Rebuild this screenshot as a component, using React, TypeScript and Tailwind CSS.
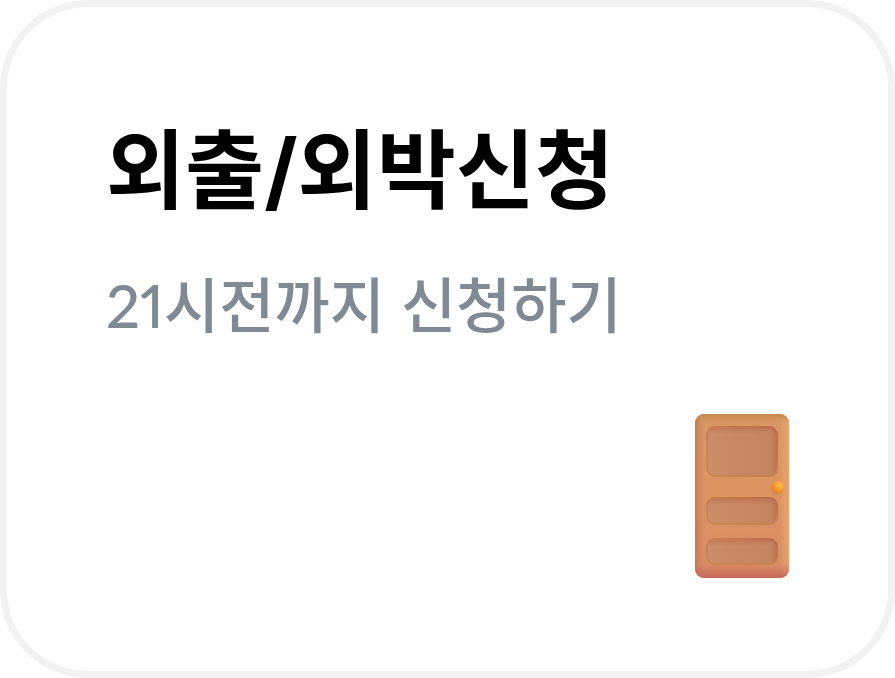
function DoorIcon() {
  const panels = [
    { y: 12, height: 51 },
    { y: 83, height: 28 },
    { y: 124, height: 27 },
  ];

  return (
    <svg width="94" height="164" viewBox="0 0 94 164" role="img" aria-label="문">
      <defs>
        <linearGradient id="face" x1="0" y1="0" x2="0" y2="1">
          <stop offset="0" stopColor="#d79763" />
          <stop offset="0.5" stopColor="#dc9461" />
          <stop offset="1" stopColor="#d88a66" />
        </linearGradient>
        <linearGradient id="leftEdge">
          <stop offset="0" stopColor="#bd6e4c" stopOpacity="0.7" />
          <stop offset="1" stopColor="#d18656" stopOpacity="0" />
        </linearGradient>
        <linearGradient id="rightEdge">
          <stop offset="0" stopColor="#e8a46c" stopOpacity="0" />
          <stop offset="1" stopColor="#e8a46c" />
        </linearGradient>
        <linearGradient id="topEdge" x1="0" y1="0" x2="0" y2="1">
          <stop offset="0" stopColor="#c6884e" />
          <stop offset="1" stopColor="#d08b56" stopOpacity="0" />
        </linearGradient>
        <linearGradient id="bottomEdge" x1="0" y1="0" x2="0" y2="1">
          <stop offset="0" stopColor="#ca6c5a" stopOpacity="0" />
          <stop offset="1" stopColor="#c5685a" />
        </linearGradient>
        <linearGradient id="panel">
          <stop offset="0" stopColor="#cc8d68" />
          <stop offset="1" stopColor="#c48460" />
        </linearGradient>
        <linearGradient id="rim" x1="0" y1="1" x2="1" y2="0">
          <stop offset="0" stopColor="#c9894c" />
          <stop offset="0.5" stopColor="#c9804f" />
          <stop offset="1" stopColor="#b9674a" />
        </linearGradient>
        <radialGradient id="knob" cx="0.65" cy="0.35" r="0.7">
          <stop offset="0" stopColor="#ffbd50" />
          <stop offset="0.5" stopColor="#fb9f30" />
          <stop offset="1" stopColor="#ee8018" />
        </radialGradient>
        <filter id="soft" x="-20%" y="-20%" width="140%" height="140%">
          <feGaussianBlur stdDeviation="1.5" />
        </filter>
        <clipPath id="doorShape">
          <rect width="94" height="164" rx="9" />
        </clipPath>
      </defs>
      <g clipPath="url(#doorShape)">
        <rect width="94" height="164" fill="url(#face)" />
        <rect width="10" height="164" fill="url(#leftEdge)" />
        <rect x="84" width="10" height="164" fill="url(#rightEdge)" />
        <rect width="94" height="9" fill="url(#topEdge)" />
        <rect y="150" width="94" height="14" fill="url(#bottomEdge)" />
      </g>
      {panels.map(({ y, height }) => (
        <g key={y}>
          <clipPath id={`panel-${y}`}>
            <rect x="11" y={y} width="72" height={height} rx="9" />
          </clipPath>
          <g clipPath={`url(#panel-${y})`}>
            <rect x="11" y={y} width="72" height={height} fill="url(#panel)" />
            <path
              d={`M11 ${y + 2} H81 V${y + height}`}
              fill="none"
              stroke="#b9674a"
              strokeWidth="5"
              opacity="0.5"
              filter="url(#soft)"
            />
            <rect x="11" y={y} width="72" height={height} rx="9" fill="none" stroke="url(#rim)" strokeWidth="4" opacity="0.85" />
          </g>
        </g>
      ))}
      <circle cx="82" cy="75" r="6" fill="#b9643c" opacity="0.3" filter="url(#soft)" />
      <circle cx="83" cy="73" r="6" fill="url(#knob)" />
    </svg>
  );
}

export default function App() {
  return (
    <main className="flex min-h-screen flex-col justify-between rounded-[88px] border-[7px] border-[#f2f2f2] bg-white px-[99px] pt-[102px] pb-[93px] font-['Inter','Noto_Sans_CJK_KR',sans-serif]">
      <div>
        <h1 className="text-[86px] leading-[124px] font-bold whitespace-nowrap text-black">외출/외박신청</h1>
        <p className="mt-7 text-[60px] leading-[88px] font-medium whitespace-nowrap text-[#808a94]">
          <span className="font-['Lato','Noto_Sans_CJK_KR',sans-serif] proportional-nums">21</span>시전까지 신청하기
        </p>
      </div>
      <div className="flex justify-end">
        <DoorIcon />
      </div>
    </main>
  );
}
